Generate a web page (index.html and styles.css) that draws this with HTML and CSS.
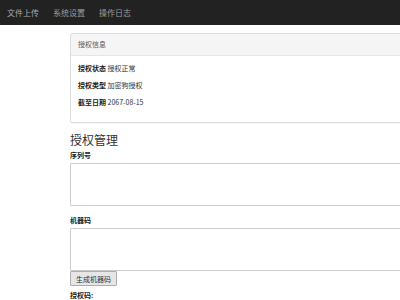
FILE: index.html
```html
<!DOCTYPE html>
<html lang="zh-CN">
<head>
    <meta charset="UTF-8">
    <title>授权管理</title>
    <link rel="stylesheet" href="styles.css">
</head>
<body>
    <nav class="navbar">
        <a href="#">文件上传</a>
        <a href="#">系统设置</a>
        <a href="#">操作日志</a>
    </nav>

    <div class="container">
        <div class="panel">
            <div class="panel-heading">授权信息</div>
            <div class="panel-body">
                <p><b>授权状态</b> 授权正常</p>
                <p><b>授权类型</b> 加密狗授权</p>
                <p><b>截至日期</b> 2067-08-15</p>
            </div>
        </div>

        <h3>授权管理</h3>
        <label>序列号</label>
        <textarea class="field"></textarea>

        <label class="gap">机器码</label>
        <textarea class="field"></textarea>
        <button class="btn">生成机器码</button>

        <label class="gap2">授权码:</label>
    </div>
</body>
</html>
```

FILE: styles.css
```css
body, html {
    margin: 0;
    padding: 0;
    overflow: hidden;
    background-color: white;
    font-family: "Noto Sans CJK SC", "Liberation Sans", sans-serif;
    color: #333;
    font-size: 7px;
}
.navbar {
    height: 25px;
    background-color: #222;
    display: flex;
    align-items: center;
}
.navbar a {
    color: #9d9d9d;
    text-decoration: none;
    font-size: 8px;
    padding: 0 7px;
}
.navbar a:first-child {
    color: #aaa;
}
.container {
    margin-left: 70px;
    width: 420px;
    display: flex;
    flex-direction: column;
}
.panel {
    margin-top: 8px;
    border: 1px solid #ddd;
    border-radius: 2px;
    box-shadow: 0 1px 1px rgba(0,0,0,0.04);
}
.panel-heading {
    background-color: #f5f5f5;
    border-bottom: 1px solid #e5e5e5;
    height: 21px;
    line-height: 21px;
    padding-left: 7px;
    color: #555;
}
.panel-body {
    padding: 4px 7px 11px;
}
.panel-body p {
    margin: 0;
    line-height: 17px;
}
.panel-body b {
    color: #222;
}
h3 {
    margin: 7px 0 0;
    font-size: 12px;
    font-weight: normal;
    line-height: 19px;
}
label {
    font-weight: bold;
    color: #222;
    line-height: 10px;
    margin-top: 1px;
}
.gap {
    margin-top: 9px;
}
.gap2 {
    margin-top: 4px;
}
.field {
    margin: 3px 0 0;
    height: 43px;
    border: 1px solid #ccc;
    border-radius: 1px;
    padding: 0;
    resize: none;
    box-sizing: border-box;
    width: 100%;
}
.btn {
    align-self: flex-start;
    margin: 0;
    width: 47px;
    height: 15px;
    padding: 0;
    font-family: inherit;
    font-size: 7px;
    color: #333;
    background-color: #e6e6e6;
    border: 1px solid #adadad;
    border-radius: 1px;
}
```
